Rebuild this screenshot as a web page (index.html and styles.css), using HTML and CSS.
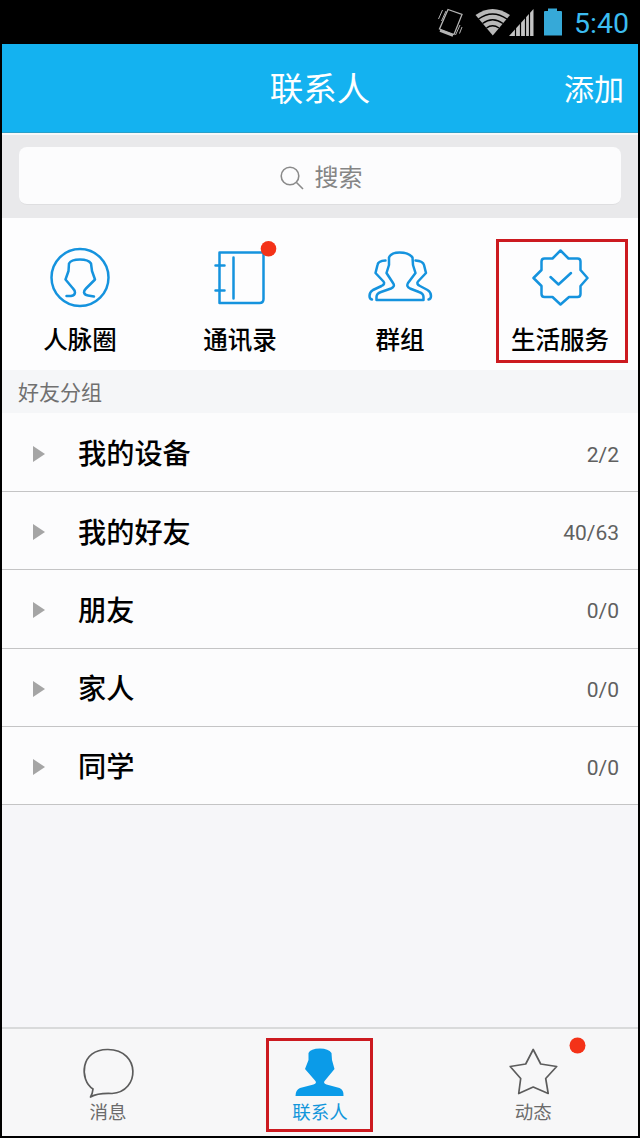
FILE: index.html
```html
<!DOCTYPE html>
<html lang="zh-CN">
<head>
<meta charset="utf-8">
<title>联系人</title>
<link rel="stylesheet" href="styles.css">
</head>
<body>
<div class="phone">
  <div class="status">
    <svg class="status-icons" viewBox="430 0 140 44">
      <g fill="none" stroke="#b5b5b5" stroke-width="1.3">
        <path d="M448 9.5 462 14.500 454 34.500 439.500 29Z"/>
        <path d="M440 30.500 453 35.500" stroke-width="2.500"/>
        <path d="M438.500 19 442.500 10M441.500 21 446 11M455.500 35 460 25M459.500 33.500 462 27" stroke-width="1"/>
      </g>
      <path d="M475.500 15Q492.500 3 510 15L492.800 35.500Z" fill="#b8b8b8"/>
      <g fill="none" stroke="#000" stroke-width="1.500">
        <path d="M478.500 19Q492.500 9 507 19M482.500 23.500Q492.500 16 503 23.500M486.500 28Q492.500 23.500 499 28"/>
      </g>
      <path d="M509 36 533.500 9V36Z" fill="#c4c4c4"/>
      <path d="M515.500 27V36M520.500 22V36M525.500 17V36M529.500 12V36" stroke="#000" stroke-width="1.200"/>
      <path d="M544 12Q544 11 545 11H548V8.500H557V11H561Q562 11 562 12V35.500H544Z" fill="#36a9d8"/>
    </svg>
    <span class="clock">5:40</span>
  </div>

  <header class="header">
    <span></span>
    <h1 class="title">联系人</h1>
    <span class="add">添加</span>
  </header>

  <div class="search">
    <div class="field">
      <svg class="lens" viewBox="0 0 24 24"><circle cx="10" cy="10" r="8.800"/><path d="M16.500 16.500 23 23"/></svg>
      <span>搜索</span>
    </div>
  </div>

  <nav class="shortcuts">
    <div class="shortcut">
      <svg class="shortcut-icon" viewBox="40 240 80 70">
        <circle cx="80" cy="277.500" r="28.500"/>
        <path d="M66.500 296H71Q75 295.500 75 292.500 75 290.500 73 288.500L65.500 279.500 68.500 271 69 263.500Q71 259.500 80 259.500 88.500 259.500 91 263.500L92 271 95 279.500 86 288.500Q84 290.500 84 292.500 84.500 295 88 295.500L94 296.500"/>
      </svg>
      <span>人脉圈</span>
    </div>
    <div class="shortcut">
      <svg class="shortcut-icon" viewBox="200 240 80 70">
        <path d="M219.500 252.500H263.500V299Q263.500 303 259.500 303H219.500ZM233.500 257.500V298.500M215.500 265.500H224.500M215.500 290.500H224.500"/>
        <circle class="dot" cx="268.500" cy="248.800" r="7.800"/>
      </svg>
      <span>通讯录</span>
    </div>
    <div class="shortcut">
      <svg class="shortcut-icon" viewBox="360 240 80 70">
        <path d="M376.500 300V297Q376.500 293.500 381 292L391 288.500Q395.500 286.500 393 283L386.500 273 389 265V257.500Q391 252.500 399.500 252.500 409 252.500 412.500 257.500L413 265 415.500 273 408 283Q406 286.500 410 288.500L419 292Q423.500 293.500 423.500 297V300Z"/>
        <path d="M385.500 260.500Q378 261 377.500 265L375.500 273 383.500 281.500Q385.500 284 381.500 286L373 290Q369.500 292 369.500 296 369.500 299 372 299.500M415.500 260.500Q423 261 424 265L426 273 418 281.500Q416 284 420 286L427.500 290Q431 292 431 296 431 299 428.500 299.500"/>
      </svg>
      <span>群组</span>
    </div>
    <div class="shortcut marked">
      <svg class="shortcut-icon" viewBox="520 240 80 70">
        <path d="M560.500 250.500 568.500 258.500H577.500Q580.500 258.500 580.500 261.500V270L587.500 278 580.500 286V294Q580.500 297 577.500 297H569L560.500 304.500 552.500 297H544.500Q541.500 297 541.500 294V286L533.500 278 541.500 270V261.500Q541.500 258.500 544.500 258.500H552.500Z"/>
        <path d="M550.500 277 558.500 284.500 571 273"/>
      </svg>
      <span>生活服务</span>
    </div>
  </nav>

  <h2 class="section">好友分组</h2>
  <ul class="groups">
    <li class="group"><i class="arrow"></i><span class="name">我的设备</span><span class="count">2/2</span></li>
    <li class="group"><i class="arrow"></i><span class="name">我的好友</span><span class="count">40/63</span></li>
    <li class="group"><i class="arrow"></i><span class="name">朋友</span><span class="count">0/0</span></li>
    <li class="group"><i class="arrow"></i><span class="name">家人</span><span class="count">0/0</span></li>
    <li class="group"><i class="arrow"></i><span class="name">同学</span><span class="count">0/0</span></li>
  </ul>

  <footer class="tabs">
    <div class="tab first">
      <svg class="tab-icon" viewBox="58 1034 100 68"><path d="M93 1089C79 1080 80 1049 108 1049.500C141 1050 140 1092 112 1093.500C101 1093 94 1095 90.500 1097Q92.500 1094 93 1089Z"/></svg>
      <span>消息</span>
    </div>
    <div class="tab active">
      <svg class="tab-icon" viewBox="270 1034 100 68"><path d="M295.500 1096Q295.500 1090 300 1088L313.500 1084.500Q317.500 1083 315 1080.500L305 1069 308.500 1060V1053Q310.500 1048.500 320 1048.500 328.500 1048.500 331.500 1053L332 1060 334.500 1069 325 1080.500Q322.500 1083 326.500 1084.500L339.500 1088Q344 1090 343.500 1096Z"/></svg>
      <span>联系人</span>
    </div>
    <div class="tab">
      <svg class="tab-icon" viewBox="483.300 1034 100 68">
        <path d="M533.500 1049.500 541 1064 557 1066.500 546 1078.500 548.500 1093.500 533.500 1087 519 1093.500 521 1078.500 510.500 1066.500 526 1064Z"/>
        <circle class="dot" cx="577.800" cy="1045.500" r="8"/>
      </svg>
      <span>动态</span>
    </div>
  </footer>
</div>
</body>
</html>
```
FILE: styles.css
```css
*,
*::after { box-sizing: border-box; }

body {
  margin: 0;
  background: #000;
  font-family: "Liberation Sans", "Noto Sans CJK SC", sans-serif;
}

.phone {
  display: flex;
  flex-direction: column;
  width: 636px;
  height: 1136px;
  margin: 0 2px;
  overflow: hidden;
  background: #f6f6f9;
}

.status {
  display: flex;
  align-items: center;
  justify-content: flex-end;
  flex: none;
  height: 44px;
  padding-right: 9px;
  background: #000;
}

.status-icons { width: 140px; height: 44px; }

.clock {
  width: 59px;
  padding-top: 3px;
  text-align: right;
  white-space: nowrap;
  font: 28.5px/44px Roboto, sans-serif;
  color: #3cbcf0;
}

.header {
  display: grid;
  grid-template-columns: 1fr auto 1fr;
  align-items: center;
  flex: none;
  height: 89px;
  padding: 4px 14px 0;
  background: #14b2f0;
  border-bottom: 1px solid #2b9fc8;
  color: #fff;
}

.title { margin: 0; font-size: 33.5px; font-weight: 400; line-height: 40px; }
.add { justify-self: end; font-size: 30px; line-height: 40px; }

.search {
  flex: none;
  height: 85px;
  padding: 12px 17px 14px;
  background: #e9e9eb;
  border-top: 2px solid #f8f8f8;
}

.field {
  display: flex;
  align-items: center;
  justify-content: center;
  gap: 11px;
  height: 58px;
  padding: 4px 0 0 2px;
  border-radius: 8px;
  background: #fcfcfd;
  border-bottom: 1px solid #dedee0;
  font-size: 24px;
  line-height: 30px;
  color: #858585;
}

.lens {
  width: 24px;
  height: 24px;
  fill: none;
  stroke: #8a8a8a;
  stroke-width: 1.6;
}

.shortcuts {
  display: grid;
  grid-template-columns: repeat(4, 160px);
  flex: none;
  height: 152px;
  margin: 0 -2px;
  background: #fdfdfe;
}

.shortcut {
  display: flex;
  flex-direction: column;
  align-items: center;
  gap: 16px;
  position: relative;
  padding-top: 22px;
  font-size: 24.5px;
  font-weight: 500;
  line-height: 30px;
  color: #000;
}

.shortcut-icon {
  width: 80px;
  height: 70px;
  fill: none;
  stroke: #1593de;
  stroke-width: 2.5;
  stroke-linejoin: round;
  stroke-linecap: round;
}

.dot { fill: #f43218; stroke: none; }

.marked::after,
.active::after {
  content: "";
  position: absolute;
  border: 3px solid #cc1a20;
}

.marked::after { inset: 21px 12px 7px 16px; }

.section {
  flex: none;
  height: 43px;
  margin: 0;
  padding-left: 16px;
  font-size: 21px;
  font-weight: 400;
  line-height: 45px;
  color: #707070;
  background: #f5f6f8;
}

.groups {
  display: flex;
  flex-direction: column;
  flex: none;
  height: 392px;
  margin: 0;
  padding: 0;
  list-style: none;
}

.group {
  display: flex;
  align-items: center;
  flex: 1;
  padding: 3px 19px 0 31px;
  border-bottom: 1px solid #c4c4c5;
  background: #fcfcfd;
}

.group:first-child { flex: 0 0 79px; }

.arrow {
  border-left: 12px solid #a5a5a5;
  border-top: 8.5px solid transparent;
  border-bottom: 8.5px solid transparent;
}

.name {
  flex: 1;
  margin-left: 33px;
  padding-top: 1px;
  font-size: 28.2px;
  font-weight: 500;
  line-height: 36px;
  color: #000;
}

.count { padding-top: 2px; font: 21px/30px Roboto, sans-serif; color: #606060; }

.tabs {
  display: grid;
  grid-template-columns: repeat(3, 1fr);
  flex: none;
  height: 109px;
  margin: auto -2px 0;
  border-top: 2px solid #d9dadb;
  background: #f7f7f8;
}

.tab {
  display: flex;
  flex-direction: column;
  align-items: center;
  position: relative;
  padding-top: 5px;
  font-size: 18.5px;
  line-height: 22px;
  color: #6b6b6b;
}

.first { left: 1.3px; }

.tab-icon {
  width: 100px;
  height: 68px;
  overflow: visible;
  fill: none;
  stroke: #5c5c5c;
  stroke-width: 1.7;
  stroke-linejoin: round;
}

.active { color: #1296db; }
.active .tab-icon { fill: #0b9be8; stroke: none; }
.active::after { left: 53px; top: 9px; width: 107px; height: 94px; }
```
